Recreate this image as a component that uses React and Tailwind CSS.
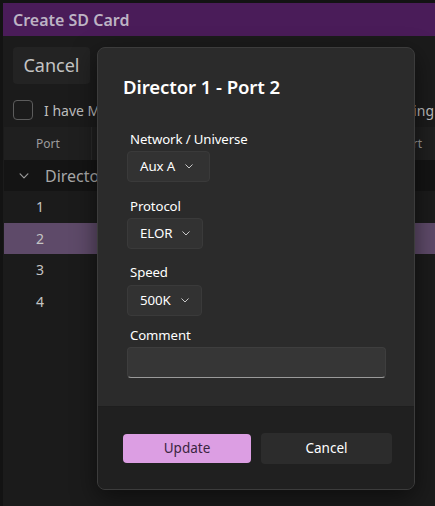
import React from "react";

function Chevron({ className = "", w = 8, h = 5 }) {
  return (
    <svg className={className} width={w} height={h} viewBox="0 0 8 5" fill="none">
      <path d="M0.75 0.75 L4 4 L7.25 0.75" stroke="currentColor" strokeWidth="1" strokeLinecap="round" strokeLinejoin="round" />
    </svg>
  );
}

function Select({ value, width }) {
  return (
    <div
      className={`flex h-[31px] items-center rounded-[4px] border border-[#3a3a3a] bg-[#323232] pl-[12px] text-[13.3px] tracking-[-0.1px] text-white ${width}`}
    >
      <span>{value}</span>
      <Chevron className="ml-[10px] text-[#c8c8c8]" />
    </div>
  );
}

export default function App() {
  const font = { fontFamily: '"Noto Sans", "Open Sans", sans-serif' };
  return (
    <div className="relative h-[506px] w-[435px] overflow-hidden bg-[#131313]" style={font}>
      <div className="ml-[3px] mt-[3px] flex h-[503px] flex-col bg-[#1b1b1b]">
        <div className="flex h-[33px] items-center bg-[#4a1c59] pl-[10px] text-[16px] font-semibold text-[#bdb3c4]">
          Create SD Card
        </div>
        <div className="ml-[10px] mt-[11px] flex h-[37px] w-[77px] items-center justify-center rounded-[4px] bg-[#232323] text-[18px] text-[#c4c4c4]">
          Cancel
        </div>
        <div className="mt-[16px] flex h-[20px] items-center whitespace-nowrap">
          <div className="ml-[10px] h-[20px] w-[20px] shrink-0 rounded-[4px] border border-[#5c5c5c]" />
          <span className="ml-[11px] text-[14px] text-[#bdbdbd]">I have Made sure</span>
          <span className="ml-auto pr-[1px] text-[14px] text-[#bdbdbd]">using</span>
        </div>
        <div className="mt-[7px] ml-[1px] flex h-[33px] items-center whitespace-nowrap bg-[#1f1f1f] text-[12px] text-[#9c9c9c]">
          <div className="flex h-full w-[88px] shrink-0 items-center border-r border-[#2a2a2a] pl-[32px]">Port</div>
          <div className="ml-auto pr-[13px]">Alert</div>
        </div>
        <div className="ml-[1px] flex h-[31px] items-center bg-[#141414] text-[16px] text-[#a8a8a8]">
          <Chevron className="ml-[15px] text-[#9a9a9a]" w={10} h={6} />
          <span className="ml-[16px]">Director 1</span>
        </div>
        {["1", "2", "3", "4"].map((n) => (
          <div
            key={n}
            className={`ml-[1px] flex h-[31.5px] items-center pl-[32px] text-[14px] text-[#c4c4c4] ${
              n === "2" ? "bg-[#5e4a69]" : ""
            }`}
          >
            {n}
          </div>
        ))}
      </div>

      <div className="absolute left-[97px] top-[47px] flex h-[443px] w-[318px] flex-col overflow-hidden rounded-[8px] border border-[#3c3c3c] bg-[#2b2b2b] shadow-[0_8px_24px_rgba(0,0,0,0.5)]">
        <div className="flex flex-1 flex-col pl-[25px]">
          <div className="mt-[25px] text-[18.6px] font-semibold leading-[28px] tracking-[-0.1px] text-white">Director 1 - Port 2</div>
          <div className="mt-[28px] flex flex-col pl-[4px] text-[13.2px] tracking-[-0.1px]">
            <div className="pl-[3px] leading-[20px] text-white">Network / Universe</div>
            <div className="mt-[2px]">
              <Select value="Aux A" width="w-[83px]" />
            </div>
            <div className="mt-[14px] pl-[3px] leading-[20px] text-white">Protocol</div>
            <div className="mt-[2px]">
              <Select value="ELOR" width="w-[76px]" />
            </div>
            <div className="mt-[13px] pl-[3px] leading-[20px] text-white">Speed</div>
            <div className="mt-[3px]">
              <Select value="500K" width="w-[75px]" />
            </div>
            <div className="mt-[9px] pl-[3px] leading-[20px] text-white">Comment</div>
            <div className="mt-[2px] h-[31px] w-[259px] rounded-[4px] border border-[#3e3e3e] border-b-[#9a9a9a] bg-[#363636]" />
          </div>
        </div>
        <div className="flex h-[83px] items-center gap-[10px] border-t border-[#1e1e1e] bg-[#202020] pl-[25px]">
          <div className="flex h-[29px] w-[128px] items-center justify-center rounded-[4px] bg-[#dc9ee3] text-[13.5px] text-[#3a2540]">
            Update
          </div>
          <div className="flex h-[31px] w-[131px] items-center justify-center rounded-[4px] bg-[#2c2c2c] text-[13.5px] text-white">
            Cancel
          </div>
        </div>
      </div>
    </div>
  );
}
